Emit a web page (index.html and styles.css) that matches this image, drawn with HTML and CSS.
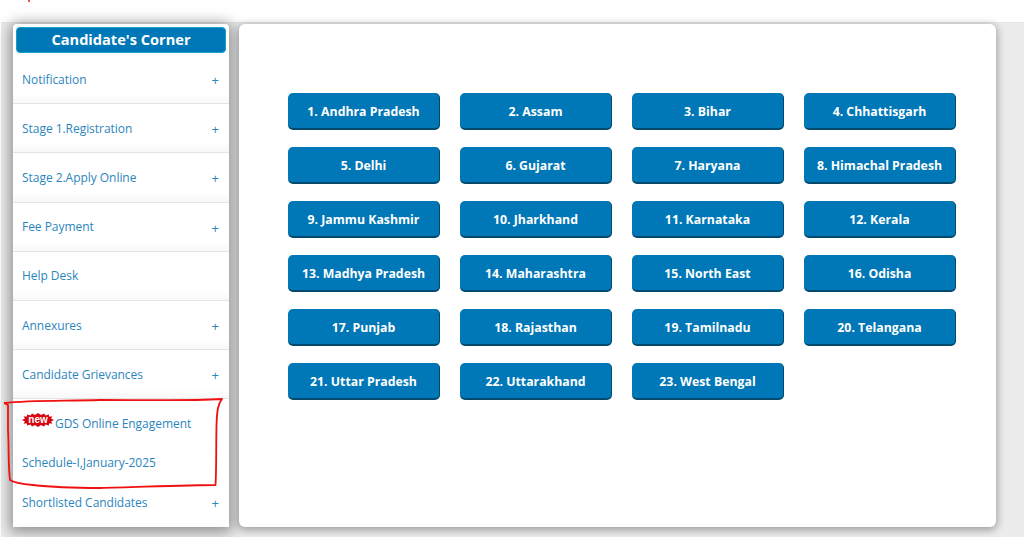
FILE: index.html
```html
<!DOCTYPE html>
<html lang="en">
<head>
<meta charset="utf-8">
<title>Candidate's Corner</title>
<link rel="stylesheet" href="styles.css">
</head>
<body>
<svg class="speck" width="4" height="3" viewBox="0 0 4 3"><rect x="1" y="0" width="2" height="2" fill="#e8505a"/></svg>
<main class="page">
  <aside class="side">
    <h2 class="side-title">Candidate's Corner</h2>
    <ul class="menu">
      <li class="item"><span>Notification</span><b class="plus">+</b></li>
      <li class="item"><span>Stage 1.Registration</span><b class="plus">+</b></li>
      <li class="item"><span>Stage 2.Apply Online</span><b class="plus">+</b></li>
      <li class="item"><span>Fee Payment</span><b class="plus">+</b></li>
      <li class="item"><span>Help Desk</span></li>
      <li class="item"><span>Annexures</span><b class="plus">+</b></li>
      <li class="item"><span>Candidate Grievances</span><b class="plus">+</b></li>
      <li class="item plain first-plain">
        <span class="new-wrap">
          <span class="new">
            <svg class="burst" width="32" height="14" viewBox="0 0 32 14"><polygon fill="#d5060f" points="0,7 3,5.5 1.5,3.5 5,3.5 5,1.5 8.5,2.5 10,0.5 13,2 16,0 19,2 22,0.5 23.5,2.5 27,1.5 27,3.5 30.5,3.5 29,5.5 32,7 29,8.5 30.5,10.5 27,10.5 27,12.5 23.5,11.5 22,13.5 19,12 16,14 13,12 10,13.5 8.5,11.5 5,12.5 5,10.5 1.5,10.5 3,8.5"/></svg>
            <span class="new-text">new</span>
          </span>GDS Online Engagement
        </span>
      </li>
      <li class="item plain"><span>Schedule-I,January-2025</span></li>
      <li class="item plain"><span>Shortlisted Candidates</span><b class="plus">+</b></li>
    </ul>
  </aside>
  <section class="card">
    <div class="states">
      <a class="state">1. Andhra Pradesh</a>
      <a class="state">2. Assam</a>
      <a class="state">3. Bihar</a>
      <a class="state">4. Chhattisgarh</a>
      <a class="state">5. Delhi</a>
      <a class="state">6. Gujarat</a>
      <a class="state">7. Haryana</a>
      <a class="state">8. Himachal Pradesh</a>
      <a class="state">9. Jammu Kashmir</a>
      <a class="state">10. Jharkhand</a>
      <a class="state">11. Karnataka</a>
      <a class="state">12. Kerala</a>
      <a class="state">13. Madhya Pradesh</a>
      <a class="state">14. Maharashtra</a>
      <a class="state">15. North East</a>
      <a class="state">16. Odisha</a>
      <a class="state">17. Punjab</a>
      <a class="state">18. Rajasthan</a>
      <a class="state">19. Tamilnadu</a>
      <a class="state">20. Telangana</a>
      <a class="state">21. Uttar Pradesh</a>
      <a class="state">22. Uttarakhand</a>
      <a class="state">23. West Bengal</a>
    </div>
  </section>
</main>
<svg class="scribble" width="226" height="100" viewBox="0 0 226 100"><path d="M4 8 C30 5 60 6 100 5 C140 5 190 6 222 4 C218 9 217 15 216.500 30 C216 55 216.500 75 215.500 90 C190 90 140 92 100 93 C70 93 50 92 33 90 C22 89 14 88 10 85 C8 70 9 50 8 35 C8 25 8 15 8 10 L4 8" fill="none" stroke="#f01010" stroke-width="1.8" stroke-linejoin="round"/></svg>
</body>
</html>
```
FILE: styles.css
```css
* { box-sizing: border-box; }
html, body { margin: 0; padding: 0; }
body {
  width: 1024px;
  height: 537px;
  background: #fff;
  font-family: "Open Sans", sans-serif;
  position: relative;
  overflow: hidden;
}
.speck { position: absolute; left: 27px; top: 0; }
.page {
  margin: 22px 0 0 1px;
  height: 515px;
  padding: 1px 0 0 12px;
  display: flex;
  align-items: flex-start;
  gap: 10px;
  background: #ececec;
  border-top: 1px solid #e6e6e6;
}
.side {
  width: 216px;
  height: 503px;
  background: #fff;
  border-radius: 4px 4px 0 0;
  box-shadow: 0 2px 14px 3px rgba(0,0,0,.4);
  padding-top: 3px;
  flex: none;
}
.side-title {
  margin: 0 3px;
  height: 26px;
  border-radius: 4px;
  background: #0077b6;
  border: 1px solid #12a0c4;
  color: #fff;
  font-size: 14.6px;
  font-weight: 700;
  line-height: 22px;
  text-align: center;
}
.menu { list-style: none; margin: 2px 0 0; padding: 0; }
.item {
  height: 49.2px;
  padding: 0 10px 0 9px;
  display: flex;
  align-items: center;
  justify-content: space-between;
  font-size: 12px;
  letter-spacing: -.04px;
  color: #2b85bd;
  border-bottom: 1px solid #e4e4e4;
  background: linear-gradient(#fff 80%, #f8f8f8);
}
.plain { border-bottom: 0; background: #fff; height: 39.5px; }
.first-plain { margin-top: 4px; }
.plus { font-weight: 400; font-size: 13px; color: #2b85bd; margin-top: 2px; }
.new-wrap { display: flex; align-items: center; }
.new { position: relative; display: block; width: 32px; height: 14px; margin-top: -7px; margin-right: 1px; }
.burst { display: block; }
.new-text {
  position: absolute;
  left: 0; right: 0; top: 0;
  text-align: center;
  color: #fff;
  font-family: "Liberation Sans", sans-serif;
  font-size: 10px;
  font-weight: 700;
  line-height: 13px;
}
.card {
  width: 757px;
  height: 503px;
  background: #fff;
  border-radius: 6px;
  box-shadow: 0 2px 8px 1px rgba(0,0,0,.35);
  padding: 69px 40px 0 49px;
  flex: none;
}
.states {
  display: grid;
  grid-template-columns: repeat(4, 152px);
  grid-auto-rows: 37px;
  column-gap: 20px;
  row-gap: 17px;
}
.state {
  display: flex;
  align-items: center;
  justify-content: center;
  padding-top: 2px;
  background: #0077b6;
  border-radius: 5px;
  border-bottom: 2px solid #04496e;
  border-right: 1px solid #04496e;
  color: #fff;
  font-size: 12.3px;
  font-weight: 700;
  white-space: nowrap;
}
.scribble { position: absolute; left: 0; top: 395px; pointer-events: none; }
```
